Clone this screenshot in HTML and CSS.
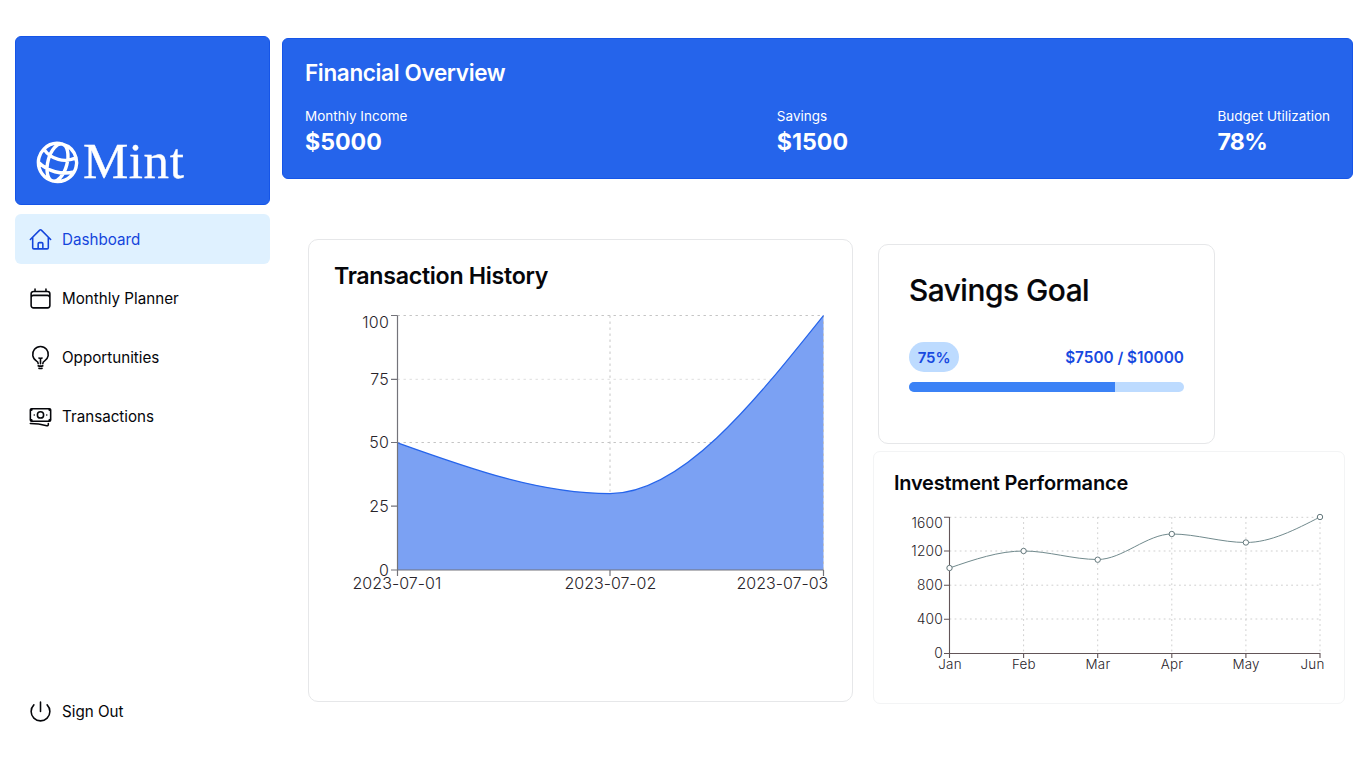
FILE: index.html
```html
<!DOCTYPE html>
<html lang="en">
<head>
<meta charset="utf-8">
<title>Mint</title>
<link rel="stylesheet" href="styles.css">
</head>
<body>
<div class="app">
  <aside class="sidebar">
    <a class="brand">
      <svg class="brand-icon" viewBox="0 0 24 24"><path d="M12 21a9.004 9.004 0 0 0 8.716-6.747M12 21a9.004 9.004 0 0 1-8.716-6.747M12 21c2.485 0 4.5-4.03 4.5-9S14.485 3 12 3m0 18c-2.485 0-4.5-4.03-4.5-9S9.515 3 12 3m0 0a8.997 8.997 0 0 1 7.843 4.582M12 3a8.997 8.997 0 0 0-7.843 4.582m15.686 0A11.953 11.953 0 0 1 12 10.5c-2.998 0-5.74-1.1-7.843-2.918m15.686 0A8.959 8.959 0 0 1 21 12c0 .778-.099 1.533-.284 2.253m0 0A17.919 17.919 0 0 1 12 16.5a17.92 17.92 0 0 1-8.716-2.247m0 0A9.015 9.015 0 0 1 3 12c0-1.605.42-3.113 1.157-4.418"/></svg>
      <span class="brand-name">Mint</span>
    </a>
    <nav class="nav">
      <a class="nav-item active"><svg class="icon" viewBox="0 0 24 24"><path d="m2.25 12 8.954-8.955c.44-.439 1.152-.439 1.591 0L21.75 12M4.5 9.75v10.125c0 .621.504 1.125 1.125 1.125H9.75v-4.875c0-.621.504-1.125 1.125-1.125h2.25c.621 0 1.125.504 1.125 1.125V21h4.125c.621 0 1.125-.504 1.125-1.125V9.75M8.25 21h8.25"/></svg><span>Dashboard</span></a>
      <a class="nav-item"><svg class="icon" viewBox="0 0 24 24"><path d="M6.75 3v2.25M17.25 3v2.25M3 18.75V7.5a2.25 2.25 0 0 1 2.25-2.25h13.5A2.25 2.25 0 0 1 21 7.5v11.25m-18 0A2.25 2.25 0 0 0 5.25 21h13.5A2.25 2.25 0 0 0 21 18.75m-18 0v-7.5A2.25 2.25 0 0 1 5.25 9h13.5A2.25 2.25 0 0 1 21 11.25v7.5"/></svg><span>Monthly Planner</span></a>
      <a class="nav-item"><svg class="icon" viewBox="0 0 24 24"><path d="M12 18v-5.25m0 0a6.01 6.01 0 0 0 1.5-.189m-1.5.189a6.01 6.01 0 0 1-1.5-.189m3.75 7.478a12.06 12.06 0 0 1-4.5 0m3.75 2.383a14.406 14.406 0 0 1-3 0M14.25 18v-.192c0-.983.658-1.823 1.508-2.316a7.5 7.5 0 1 0-7.517 0c.85.493 1.509 1.333 1.509 2.316V18"/></svg><span>Opportunities</span></a>
      <a class="nav-item"><svg class="icon" viewBox="0 0 24 24"><path d="M2.25 18.75a60.07 60.07 0 0 1 15.797 2.101c.727.198 1.453-.342 1.453-1.096V18.75M3.75 4.5v.75A.75.75 0 0 1 3 6h-.75m0 0v-.375c0-.621.504-1.125 1.125-1.125H20.25M2.25 6v9m18-10.5v.75c0 .414.336.75.75.75h.75m-1.5-1.5h.375c.621 0 1.125.504 1.125 1.125v9.75c0 .621-.504 1.125-1.125 1.125h-.375m1.5-1.5H21a.75.75 0 0 0-.75.75v.75m0 0H3.75m0 0h-.375a1.125 1.125 0 0 1-1.125-1.125V15m1.5 1.5v-.75A.75.75 0 0 0 3 15h-.75M15 10.5a3 3 0 1 1-6 0 3 3 0 0 1 6 0Zm3 0h.008v.008H18V10.5Zm-12 0h.008v.008H6V10.5Z"/></svg><span>Transactions</span></a>
    </nav>
    <a class="nav-item"><svg class="icon" viewBox="0 0 24 24"><path d="M5.636 5.636a9 9 0 1 0 12.728 0M12 3v9"/></svg><span>Sign Out</span></a>
  </aside>

  <main class="main">
    <section class="overview">
      <h2 class="overview-title">Financial Overview</h2>
      <div class="stats">
        <div><p class="stat-label">Monthly Income</p><p class="stat-value">$5000</p></div>
        <div><p class="stat-label">Savings</p><p class="stat-value">$1500</p></div>
        <div><p class="stat-label">Budget Utilization</p><p class="stat-value percent">78%</p></div>
      </div>
    </section>

    <div class="panels">
      <section class="card history">
        <h2 class="history-title">Transaction History</h2>
        <svg class="chart history-chart" viewBox="334 300 510 300" width="510" height="300">
          <g class="grid">
            <path d="M397.5 315.5H823.5M397.5 442.5H823.5M610 315.5V570"/>
            <path class="faint" d="M397.5 379.3H823.5"/>
          </g>
          <path class="area" d="M397.5 442.8C468.5 468.2 539 493.6 610 493.6C681.2 493.6 752.3 404.6 823.5 315.5V570H397.5Z"/>
          <path class="grid" d="M823.5 315.5V570"/>
          <path class="area-line" d="M397.5 442.8C468.5 468.2 539 493.6 610 493.6C681.2 493.6 752.3 404.6 823.5 315.5"/>
          <path class="axis" d="M397.5 315.5V576M391 315.5H397.5M391 379.3H397.5M391 442.5H397.5M391 506.2H397.5M391 570H823.5M610 570V576M823.5 570V576"/>
          <g class="ticks end">
            <text x="389" y="328">100</text><text x="389" y="385">75</text><text x="389" y="448">50</text><text x="389" y="512">25</text><text x="389" y="575.5">0</text>
          </g>
          <g class="ticks mid">
            <text x="397" y="588.5" textLength="89">2023-07-01</text><text x="610.5" y="588.5" textLength="92">2023-07-02</text><text x="782.5" y="588.5" textLength="92">2023-07-03</text>
          </g>
        </svg>
      </section>

      <div class="side">
        <section class="card goal">
          <h2 class="goal-title">Savings Goal</h2>
          <div class="goal-row"><span class="badge">75%</span><span class="amount">$7500 / $10000</span></div>
          <div class="track"><div class="fill" style="width:75%"></div></div>
        </section>
        <section class="card invest">
          <h2 class="invest-title">Investment Performance</h2>
          <svg class="chart invest-chart" viewBox="894 505 440 175" width="440" height="175">
            <path class="grid small" d="M949.5 517.3H1320M949.5 551H1320M949.5 585.2H1320M949.5 619H1320M1023.6 517V653M1097.7 517V653M1171.8 517V653M1245.9 517V653M1320 517V653"/>
            <path class="axis dark" d="M949.5 517V658M944 517.3H949.5M944 551H949.5M944 585.2H949.5M944 619.2H949.5M944 653.5H1320M1023.6 653V658M1097.7 653V658M1171.8 653V658M1245.9 653V658M1320 653V658"/>
            <path class="line" d="M949.5 568C974.2 559.5 998.9 551 1023.6 551C1048.3 551 1073 559.5 1097.7 559.5C1122.4 559.5 1147.1 534 1171.8 534C1196.5 534 1221.2 542.5 1245.9 542.5C1270.6 542.5 1295.3 529.7 1320 517"/>
            <g class="dots"><circle cx="949.5" cy="568" r="2.7"/><circle cx="1023.6" cy="551" r="2.7"/><circle cx="1097.7" cy="559.7" r="2.7"/><circle cx="1171.8" cy="534" r="2.7"/><circle cx="1245.9" cy="542.5" r="2.7"/><circle cx="1320" cy="517" r="2.7"/></g>
            <g class="ticks small end">
              <text x="943" y="528">1600</text><text x="943" y="556">1200</text><text x="943" y="590">800</text><text x="943" y="624">400</text><text x="943" y="658">0</text>
            </g>
            <g class="ticks small months mid">
              <text x="950" y="669">Jan</text><text x="1023.8" y="669">Feb</text><text x="1098" y="669">Mar</text><text x="1172" y="669">Apr</text><text x="1246" y="669">May</text><text x="1312.5" y="669">Jun</text>
            </g>
          </svg>
        </section>
      </div>
    </div>
  </main>
</div>
</body>
</html>
```
FILE: styles.css
```css
* { box-sizing: border-box; margin: 0; padding: 0; }
body { width: 1366px; height: 768px; overflow: hidden; background: #fff; color: #05060a; font-family: Inter, "Liberation Sans", sans-serif; }
.app { display: flex; height: 768px; }

.sidebar { width: 270.4px; padding: 36px 0 32px 15.4px; display: flex; flex-direction: column; }
.brand { height: 169px; margin-bottom: 8.5px; padding: 0 0 16px 15.5px; border: 1px solid #1555e8; border-radius: 6px; background: #2564eb; color: #fff; display: flex; align-items: flex-end; }
.brand-icon { width: 51px; height: 51px; transform: rotate(15deg); fill: none; stroke: #fff; stroke-width: 1.6; stroke-linecap: round; stroke-linejoin: round; }
.brand-name { font: 51px/51px "Liberation Serif", serif; letter-spacing: 0.6px; -webkit-text-stroke: 0.3px #fff; transform: translateY(-1px); }
.nav { display: flex; flex-direction: column; gap: 8.5px; flex: 1; }
.nav-item { height: 50.5px; padding: 1px 0 0 13px; border-radius: 6px; display: flex; align-items: center; gap: 8.6px; font-size: 15.2px; }
.nav-item.active { background: #dff1ff; color: #1445dc; }
.icon { width: 25px; height: 25px; fill: none; stroke: currentColor; stroke-width: 1.5; stroke-linecap: round; stroke-linejoin: round; }

.main { flex: 1; padding: 38px 13px 0 11.6px; }
.overview { height: 141px; padding: 20px 22px 0; border: 1px solid #1555e8; border-radius: 6px; background: #2564eb; color: #fff; }
.overview-title { font-size: 22.5px; line-height: 28px; font-weight: 600; letter-spacing: -0.35px; }
.stats { margin-top: 20px; display: flex; justify-content: space-between; }
.stat-label { font-size: 13.5px; line-height: 19px; }
.stat-value { padding-top: 1px; font-size: 23.2px; line-height: 31px; font-weight: 700; }
.stat-value.percent { letter-spacing: -0.8px; }

.panels { padding: 60px 0 0 26.4px; display: flex; align-items: flex-start; }
.card { background: #fff; border: 1px solid #e6e7e9; border-radius: 10px; }
.history { width: 544.5px; height: 463px; padding: 20px 0 0 24.6px; }
.history-title { font-size: 23.2px; line-height: 32px; font-weight: 600; letter-spacing: -0.3px; }
.chart { display: block; }
.history-chart { margin-top: 8px; }
.side { margin-left: 20px; padding-top: 5px; }
.goal { width: 337px; height: 199.5px; margin-left: 5px; padding: 26px 30px 0; }
.goal-title { font-size: 29.8px; line-height: 38px; font-weight: 550; letter-spacing: -0.45px; -webkit-text-stroke: 0.2px currentColor; }
.goal-row { margin-top: 33px; display: flex; justify-content: space-between; align-items: center; color: #1749e0; }
.badge { width: 50.5px; height: 30px; border-radius: 15px; background: #bddbff; display: flex; align-items: center; justify-content: center; font-size: 15px; font-weight: 600; }
.amount { padding-top: 1px; font-size: 15.3px; font-weight: 600; }
.track { margin-top: 10px; height: 10px; border-radius: 5px; background: #bddbff; overflow: hidden; }
.fill { height: 10px; background: #3b82f6; }
.invest { width: 472px; height: 253px; margin-top: 7.5px; padding: 17px 0 0 20px; border-color: #f3f4f5; border-radius: 7px; }
.invest-title { font-size: 20px; line-height: 28px; font-weight: 600; letter-spacing: -0.2px; }
.invest-chart { margin-top: 8px; }

.grid { fill: none; stroke: #c4c4c4; stroke-dasharray: 2.4 3.6; }
.grid .faint { stroke: #dedede; }
.grid.small { stroke: #cfcfcf; stroke-dasharray: 1.8 3.3; }
.area { fill: #7ba1f3; }
.area-line { fill: none; stroke: #2564eb; stroke-width: 1.2; }
.axis { fill: none; stroke: #73737a; stroke-width: 1.2; }
.axis.dark { stroke: #625558; stroke-width: 1.1; }
.line { fill: none; stroke: #718a8d; }
.dots { fill: #fff; stroke: #64787c; }
.ticks { font-size: 16px; font-weight: 300; fill: #29242a; letter-spacing: 0.2px; }
.ticks.small { font-size: 13.8px; }
.ticks.months { font-size: 13.4px; }
.end { text-anchor: end; }
.mid { text-anchor: middle; }
```
